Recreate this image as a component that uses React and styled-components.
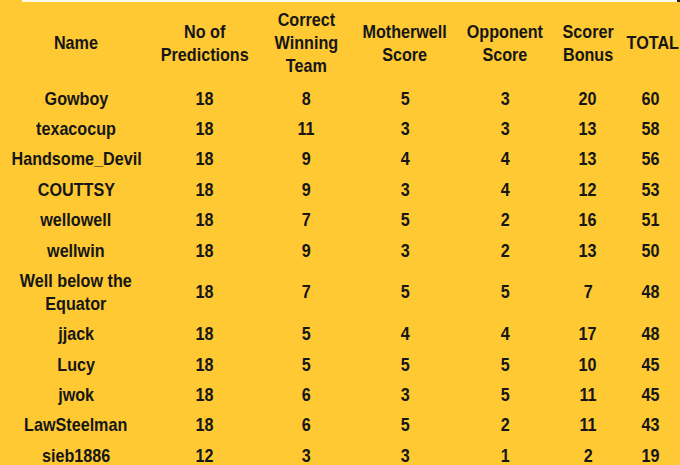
import styled, { createGlobalStyle } from 'styled-components';

const GlobalStyle = createGlobalStyle`
  html, body {
    margin : 0;
    padding : 0;
    background : #fec932;
  }
  body {
    width : 680px;
    height : 465px;
    overflow : hidden;
  }
`

const Page = styled.div`
  width : 680px;
  height : 465px;
  background : #fec932;
  font-family : "Liberation Sans", Arial, sans-serif;
  font-weight : 700;
  color : #161616;
  overflow : hidden;
`

const TopEdge = styled.div`
  height : 2px;
  margin-left : 22px;
  background : #fffbe9;
  border-right : 3px solid #222;
`

const Table = styled.table`
  width : 680px;
  table-layout : fixed;
  border-collapse : collapse;
`

const Head = styled.th`
  font-size : 19px;
  line-height : 23px;
  font-weight : 700;
  text-align : center;
  vertical-align : middle;
  padding : 6px 0;
  white-space : nowrap;
`

const Cell = styled.td`
  font-size : 19px;
  line-height : 23px;
  text-align : center;
  vertical-align : middle;
  padding : 3.7px 0;
  white-space : nowrap;
`

// no narrow face installed, so squeeze Liberation Sans to Arial Narrow width
const Narrow = styled.span`
  display : inline-block;
  transform : scaleX(0.85);
`

const columns = [
  { title: 'Name', width: 152 },
  { title: 'No of\nPredictions', width: 106 },
  { title: 'Correct\nWinning\nTeam', width: 96 },
  { title: 'Motherwell\nScore', width: 102 },
  { title: 'Opponent\nScore', width: 98 },
  { title: 'Scorer\nBonus', width: 68 },
  { title: 'TOTAL', width: 58 },
]

const rows = [
  ['Gowboy', 18, 8, 5, 3, 20, 60],
  ['texacocup', 18, 11, 3, 3, 13, 58],
  ['Handsome_Devil', 18, 9, 4, 4, 13, 56],
  ['COUTTSY', 18, 9, 3, 4, 12, 53],
  ['wellowell', 18, 7, 5, 2, 16, 51],
  ['wellwin', 18, 9, 3, 2, 13, 50],
  ['Well below the\nEquator', 18, 7, 5, 5, 7, 48],
  ['jjack', 18, 5, 4, 4, 17, 48],
  ['Lucy', 18, 5, 5, 5, 10, 45],
  ['jwok', 18, 6, 3, 5, 11, 45],
  ['LawSteelman', 18, 6, 5, 2, 11, 43],
  ['sieb1886', 12, 3, 3, 1, 2, 19],
]

const lines = (text) =>
  String(text).split('\n').map((part, i) => (
    <span key={i}>{i > 0 && <br />}{part}</span>
  ))

function App() {
  return (
    <Page>
      <GlobalStyle />
      <TopEdge />
      <Table>
        <colgroup>
          {columns.map(col => <col key={col.title} style={{ width: col.width }} />)}
        </colgroup>
        <thead>
          <tr>
            {columns.map(col => (
              <Head key={col.title}>
                <Narrow>{lines(col.title)}</Narrow>
              </Head>
            ))}
          </tr>
        </thead>
        <tbody>
          {rows.map(row => (
            <tr key={row[0]}>
              {row.map((value, i) => (
                <Cell key={i}>
                  <Narrow>{lines(value)}</Narrow>
                </Cell>
              ))}
            </tr>
          ))}
        </tbody>
      </Table>
    </Page>
  )
}

export default App
